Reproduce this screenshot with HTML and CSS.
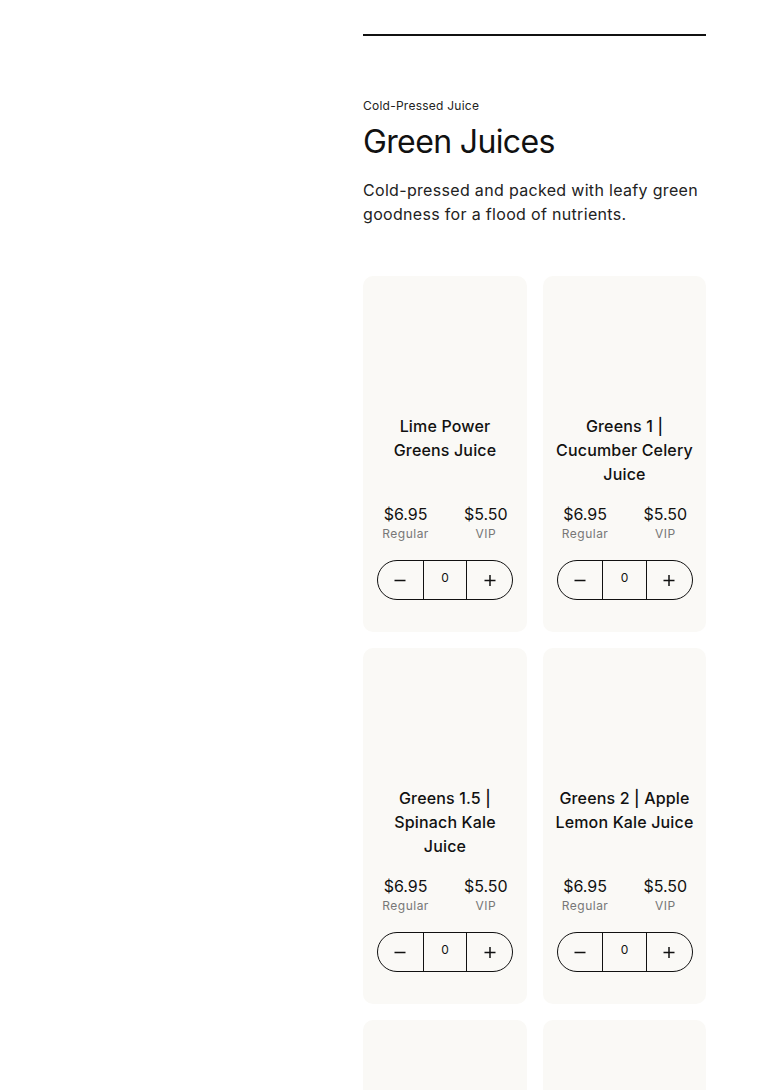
FILE: index.html
```html
<!DOCTYPE html>
<html lang="en">
<head>
<meta charset="utf-8">
<title>Green Juices</title>
<link rel="stylesheet" href="styles.css">
</head>
<body>
<div class="page">
  <aside class="sidebar"></aside>
  <main class="main">
    <div class="rule"></div>
    <section class="category">
      <p class="eyebrow">Cold-Pressed Juice</p>
      <h1 class="heading">Green Juices</h1>
      <p class="desc">Cold-pressed and packed with leafy green goodness for a flood of nutrients.</p>
      <div class="grid">
        <article class="card">
          <div class="card-img"></div>
          <h2 class="card-title">Lime Power Greens Juice</h2>
          <div class="prices">
            <div class="price"><span class="amount">$6.95</span><span class="label">Regular</span></div>
            <div class="price"><span class="amount">$5.50</span><span class="label">VIP</span></div>
          </div>
          <div class="stepper">
            <button class="step minus" aria-label="Decrease"><svg width="12" height="12" viewBox="0 0 12 12"><path d="M0.5 6.5h11" stroke="#111" stroke-width="1.5"/></svg></button>
            <span class="qty">0</span>
            <button class="step plus" aria-label="Increase"><svg width="12" height="12" viewBox="0 0 12 12"><path d="M0.5 6.5h11M6 1v11" stroke="#111" stroke-width="1.5"/></svg></button>
          </div>
        </article>
        <article class="card">
          <div class="card-img"></div>
          <h2 class="card-title">Greens 1 | Cucumber Celery Juice</h2>
          <div class="prices">
            <div class="price"><span class="amount">$6.95</span><span class="label">Regular</span></div>
            <div class="price"><span class="amount">$5.50</span><span class="label">VIP</span></div>
          </div>
          <div class="stepper">
            <button class="step minus" aria-label="Decrease"><svg width="12" height="12" viewBox="0 0 12 12"><path d="M0.5 6.5h11" stroke="#111" stroke-width="1.5"/></svg></button>
            <span class="qty">0</span>
            <button class="step plus" aria-label="Increase"><svg width="12" height="12" viewBox="0 0 12 12"><path d="M0.5 6.5h11M6 1v11" stroke="#111" stroke-width="1.5"/></svg></button>
          </div>
        </article>
        <article class="card">
          <div class="card-img"></div>
          <h2 class="card-title">Greens 1.5 | Spinach Kale Juice</h2>
          <div class="prices">
            <div class="price"><span class="amount">$6.95</span><span class="label">Regular</span></div>
            <div class="price"><span class="amount">$5.50</span><span class="label">VIP</span></div>
          </div>
          <div class="stepper">
            <button class="step minus" aria-label="Decrease"><svg width="12" height="12" viewBox="0 0 12 12"><path d="M0.5 6.5h11" stroke="#111" stroke-width="1.5"/></svg></button>
            <span class="qty">0</span>
            <button class="step plus" aria-label="Increase"><svg width="12" height="12" viewBox="0 0 12 12"><path d="M0.5 6.5h11M6 1v11" stroke="#111" stroke-width="1.5"/></svg></button>
          </div>
        </article>
        <article class="card">
          <div class="card-img"></div>
          <h2 class="card-title">Greens 2 | Apple Lemon Kale Juice</h2>
          <div class="prices">
            <div class="price"><span class="amount">$6.95</span><span class="label">Regular</span></div>
            <div class="price"><span class="amount">$5.50</span><span class="label">VIP</span></div>
          </div>
          <div class="stepper">
            <button class="step minus" aria-label="Decrease"><svg width="12" height="12" viewBox="0 0 12 12"><path d="M0.5 6.5h11" stroke="#111" stroke-width="1.5"/></svg></button>
            <span class="qty">0</span>
            <button class="step plus" aria-label="Increase"><svg width="12" height="12" viewBox="0 0 12 12"><path d="M0.5 6.5h11M6 1v11" stroke="#111" stroke-width="1.5"/></svg></button>
          </div>
        </article>
        <article class="card">
          <div class="card-img"></div>
        </article>
        <article class="card">
          <div class="card-img"></div>
        </article>
      </div>
    </section>
  </main>
</div>
</body>
</html>
```
FILE: styles.css
```css
* { box-sizing: border-box; }
html, body { margin: 0; padding: 0; background: #fff; }
body {
  font-family: Inter, "Noto Sans", "Liberation Sans", sans-serif;
  color: #111;
  -webkit-font-smoothing: antialiased;
}
.page {
  display: grid;
  grid-template-columns: 363px 343px;
}
.main {
  padding-top: 34px;
}
.rule {
  height: 2px;
  background: #111;
}
.category {
  padding-top: 62px;
}
.eyebrow {
  margin: 0;
  font-size: 12px;
  line-height: 16px;
  letter-spacing: 0.02em;
  color: #222;
}
.heading {
  margin: 8px 0 0;
  font-size: 32px;
  line-height: 40px;
  font-weight: 400;
  letter-spacing: -0.02em;
  color: #111;
}
.desc {
  margin: 16px 0 0;
  font-size: 16px;
  line-height: 24px;
  letter-spacing: 0.02em;
  color: #222;
}
.grid {
  margin-top: 50px;
  display: grid;
  grid-template-columns: 164px 163px;
  gap: 16px;
}
.card {
  background: #faf9f6;
  border-radius: 10px;
  padding: 0 8px 32px;
  height: 356px;
  display: flex;
  flex-direction: column;
  align-items: center;
}
.card-img {
  height: 138px;
  align-self: stretch;
}
.card-title {
  margin: 0;
  min-height: 72px;
  font-size: 16px;
  line-height: 24px;
  font-weight: 500;
  text-align: center;
  letter-spacing: 0.01em;
  color: #111;
}
.prices {
  margin-top: 16px;
  display: flex;
  justify-content: center;
  gap: 35px;
}
.price {
  display: flex;
  flex-direction: column;
  align-items: center;
}
.amount {
  font-size: 16px;
  line-height: 24px;
  color: #111;
}
.label {
  font-size: 12px;
  line-height: 16px;
  letter-spacing: 0.04em;
  color: #777;
}
.stepper {
  margin-top: 18px;
  width: 136px;
  height: 40px;
  border: 1px solid #111;
  border-radius: 20px;
  display: grid;
  grid-template-columns: 1fr 1fr 1fr;
  overflow: hidden;
}
.step {
  border: 0;
  background: transparent;
  padding: 0;
  display: flex;
  align-items: center;
  justify-content: center;
  cursor: pointer;
}
.qty {
  border-left: 1px solid #111;
  border-right: 1px solid #111;
  display: flex;
  align-items: center;
  justify-content: center;
  font-size: 12px;
  line-height: 16px;
  padding-bottom: 4px;
  color: #111;
}
```
